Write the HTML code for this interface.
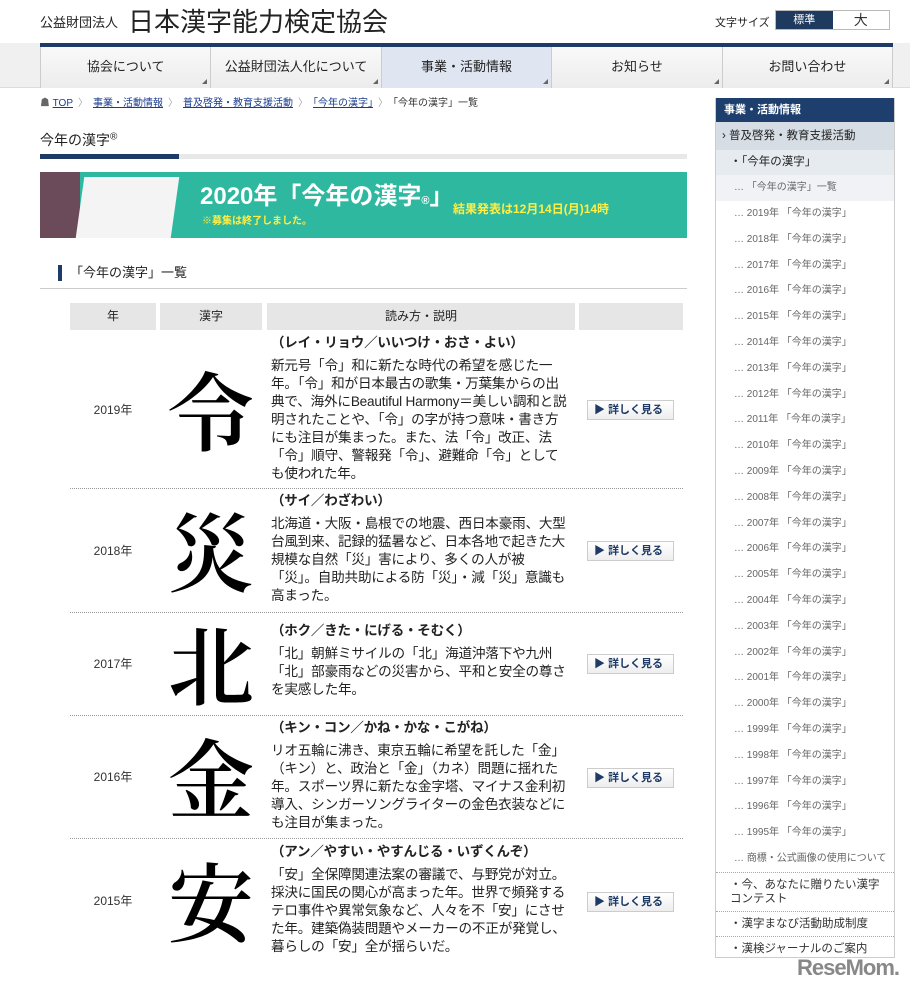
<!DOCTYPE html>
<html><head><meta charset="utf-8"><style>
*{margin:0;padding:0;box-sizing:border-box}
body{width:910px;height:990px;overflow:hidden;background:#fff;font-family:"Liberation Sans","Noto Sans CJK JP",sans-serif;color:#333;position:relative}
.abs{position:absolute}
.logo1{left:40px;top:12px;font-size:13px;color:#222}
.logo2{left:128px;top:2px;font-size:26px;color:#222}
.fs{left:715px;top:14px;font-size:11px;color:#222}
.fsb{left:775px;top:10px;width:115px;height:20px;border:1px solid #bbb;display:flex}
.fsb div{flex:1;text-align:center;font-size:12px;line-height:18px}
.navwrap{left:0;top:43px;width:910px;height:45px;background:#f0f0f0;border-bottom:1px solid #ddd}
.nav{left:40px;top:43px;width:853px;height:45px;border-top:4px solid #1e3a66;display:flex}
.nav div{flex:1;text-align:center;font-size:13px;line-height:40px;color:#222;border-right:1px solid #ccc;background:linear-gradient(#f9f9f9,#ececec);position:relative}
.nav div:first-child{border-left:1px solid #ccc}
.nav div.on{background:#dfe6f1}
.nav div:after{content:"";position:absolute;right:3px;bottom:4px;border-left:5px solid transparent;border-bottom:5px solid #666}
.bc{left:40px;top:94px;font-size:10px;color:#333}
.bc a{color:#1a3c8c;text-decoration:underline}
.bc span.s{color:#aaa;margin:0 5px}
h1{position:absolute;left:40px;top:130px;font-size:14px;font-weight:normal;color:#222}
.bar{left:40px;top:154px;width:647px;height:5px;background:#e8e8e8}
.bar i{display:block;width:139px;height:5px;background:#1e3a66}
.ban{left:40px;top:172px;width:647px;height:66px;background:#2fb8a0;overflow:hidden}
h2{position:absolute;left:58px;top:265px;font-size:13px;font-weight:normal;color:#222;border-left:4px solid #1e3a66;padding-left:8px;line-height:16px}
.h2l{left:40px;top:288px;width:647px;height:1px;background:#ccc}
.th{top:303px;height:27px;background:#e6e6e6;font-size:12px;text-align:center;line-height:27px;color:#222}
.yr{left:70px;width:86px;text-align:center;font-size:12px;color:#333}
.kj{left:160px;width:102px;text-align:center;font-family:"Noto Serif CJK JP","Noto Serif CJK SC",serif;font-weight:600;font-size:86px;color:#000;line-height:1}
.ds{left:271px;width:300px;font-size:13.6px;line-height:18px;color:#222;letter-spacing:-0.2px}
.ds b{display:block;font-size:13.5px;margin-bottom:5px}
.btn{left:587px;width:87px;height:20px;border:1px solid #ccc;background:linear-gradient(#fff,#eee);font-size:11px;font-weight:bold;color:#1e3a66;line-height:18px;padding-left:6px}
.dl{left:70px;width:613px;border-top:1px dotted #999}
.side{left:715px;top:98px;width:180px;height:860px;border:1px solid #ccc;border-top:none;overflow:hidden}
.sh{height:24px;background:#1e3f6e;color:#fff;font-size:11px;font-weight:bold;line-height:24px;padding-left:8px}
.si{font-size:10px;color:#666;height:25.8px;line-height:25.8px;padding-left:18px}
.sb{font-size:11.5px;color:#333;padding:5px 6px 5px 14px;border-top:1px dotted #aaa;line-height:14px}
</style></head><body>
<div class="abs logo1">公益財団法人</div>
<div class="abs logo2">日本漢字能力検定協会</div>
<div class="abs fs">文字サイズ</div>
<div class="abs fsb"><div style="background:#1e3a5e;color:#fff;font-size:11px">標準</div><div style="font-size:14px">大</div></div>
<div class="abs navwrap"></div>
<div class="abs nav"><div>協会について</div><div>公益財団法人化について</div><div class="on">事業・活動情報</div><div>お知らせ</div><div>お問い合わせ</div></div>
<div class="abs bc"><span style="color:#666">☗</span> <a>TOP</a><span class="s">〉</span><a>事業・活動情報</a><span class="s">〉</span><a>普及啓発・教育支援活動</a><span class="s">〉</span><a>「今年の漢字」</a><span class="s">〉</span>「今年の漢字」一覧</div>
<h1>今年の漢字<sup style="font-size:10px">®</sup></h1>
<div class="abs bar"><i></i></div>
<div class="abs ban">
<div class="abs" style="left:0;top:0;width:40px;height:66px;background:#6b4a5a"></div>
<div class="abs" style="left:40px;top:5px;width:95px;height:61px;background:#f4f4f4;transform:skewX(-8deg)"></div>
<div class="abs" style="left:160px;top:4px;font-size:24px;color:#fff;font-weight:bold">2020年「今年の漢字<span style="font-size:11px">®</span>」</div>
<div class="abs" style="left:162px;top:40px;font-size:10px;color:#ffee44;font-weight:bold">※募集は終了しました。</div>
<div class="abs" style="left:413px;top:28px;font-size:12px;color:#ffee44;font-weight:bold">結果発表は12月14日(月)14時</div>
</div>
<h2>「今年の漢字」一覧</h2>
<div class="abs h2l"></div>
<div class="abs th" style="left:70px;width:86px">年</div>
<div class="abs th" style="left:160px;width:102px">漢字</div>
<div class="abs th" style="left:267px;width:308px">読み方・説明</div>
<div class="abs th" style="left:579px;width:104px"></div>

<div class="abs yr" style="top:401px">2019年</div>
<div class="abs kj" style="top:364px">令</div>
<div class="abs ds" style="top:334px"><b>（レイ・リョウ／いいつけ・おさ・よい）</b>新元号「令」和に新たな時代の希望を感じた一年。「令」和が日本最古の歌集・万葉集からの出典で、海外にBeautiful Harmony＝美しい調和と説明されたことや、「令」の字が持つ意味・書き方にも注目が集まった。また、法「令」改正、法「令」順守、警報発「令」、避難命「令」としても使われた年。</div>
<div class="abs btn" style="top:400px">▶ 詳しく見る</div>
<div class="abs dl" style="top:488px"></div>

<div class="abs yr" style="top:542px">2018年</div>
<div class="abs kj" style="top:505px">災</div>
<div class="abs ds" style="top:492px"><b>（サイ／わざわい）</b>北海道・大阪・島根での地震、西日本豪雨、大型台風到来、記録的猛暑など、日本各地で起きた大規模な自然「災」害により、多くの人が被「災」。自助共助による防「災」・減「災」意識も高まった。</div>
<div class="abs btn" style="top:541px">▶ 詳しく見る</div>
<div class="abs dl" style="top:612px"></div>

<div class="abs yr" style="top:655px">2017年</div>
<div class="abs kj" style="top:618px">北</div>
<div class="abs ds" style="top:622px"><b>（ホク／きた・にげる・そむく）</b>「北」朝鮮ミサイルの「北」海道沖落下や九州「北」部豪雨などの災害から、平和と安全の尊さを実感した年。</div>
<div class="abs btn" style="top:654px">▶ 詳しく見る</div>
<div class="abs dl" style="top:715px"></div>

<div class="abs yr" style="top:768px">2016年</div>
<div class="abs kj" style="top:731px">金</div>
<div class="abs ds" style="top:719px"><b>（キン・コン／かね・かな・こがね）</b>リオ五輪に沸き、東京五輪に希望を託した「金」（キン）と、政治と「金」（カネ）問題に揺れた年。スポーツ界に新たな金字塔、マイナス金利初導入、シンガーソングライターの金色衣装などにも注目が集まった。</div>
<div class="abs btn" style="top:768px">▶ 詳しく見る</div>
<div class="abs dl" style="top:838px"></div>

<div class="abs yr" style="top:892px">2015年</div>
<div class="abs kj" style="top:855px">安</div>
<div class="abs ds" style="top:843px"><b>（アン／やすい・やすんじる・いずくんぞ）</b>「安」全保障関連法案の審議で、与野党が対立。採決に国民の関心が高まった年。世界で頻発するテロ事件や異常気象など、人々を不「安」にさせた年。建築偽装問題やメーカーの不正が発覚し、暮らしの「安」全が揺らいだ。</div>
<div class="abs btn" style="top:892px">▶ 詳しく見る</div>

<div class="abs side">
<div class="sh">事業・活動情報</div>
<div style="background:#d6dde5;height:28px;line-height:28px;font-size:11.5px;color:#222;padding-left:6px">› 普及啓発・教育支援活動</div>
<div style="background:#e6ebf0;height:25px;line-height:25px;font-size:11.5px;color:#222;padding-left:14px">・「今年の漢字」</div>
<div class="si" style="background:#f0f2f5;height:26px">… 「今年の漢字」一覧</div>
<div class="si">… 2019年 「今年の漢字」</div><div class="si">… 2018年 「今年の漢字」</div><div class="si">… 2017年 「今年の漢字」</div><div class="si">… 2016年 「今年の漢字」</div><div class="si">… 2015年 「今年の漢字」</div><div class="si">… 2014年 「今年の漢字」</div><div class="si">… 2013年 「今年の漢字」</div><div class="si">… 2012年 「今年の漢字」</div><div class="si">… 2011年 「今年の漢字」</div><div class="si">… 2010年 「今年の漢字」</div><div class="si">… 2009年 「今年の漢字」</div><div class="si">… 2008年 「今年の漢字」</div><div class="si">… 2007年 「今年の漢字」</div><div class="si">… 2006年 「今年の漢字」</div><div class="si">… 2005年 「今年の漢字」</div><div class="si">… 2004年 「今年の漢字」</div><div class="si">… 2003年 「今年の漢字」</div><div class="si">… 2002年 「今年の漢字」</div><div class="si">… 2001年 「今年の漢字」</div><div class="si">… 2000年 「今年の漢字」</div><div class="si">… 1999年 「今年の漢字」</div><div class="si">… 1998年 「今年の漢字」</div><div class="si">… 1997年 「今年の漢字」</div><div class="si">… 1996年 「今年の漢字」</div><div class="si">… 1995年 「今年の漢字」</div>
<div class="si">… 商標・公式画像の使用について</div>
<div class="sb">・今、あなたに贈りたい漢字コンテスト</div>
<div class="sb">・漢字まなび活動助成制度</div>
<div class="sb">・漢検ジャーナルのご案内</div>
</div>
<div class="abs" style="left:797px;top:955px;font-size:22px;font-weight:bold;color:#888;letter-spacing:-1px">ReseMom.</div>
</body></html>
